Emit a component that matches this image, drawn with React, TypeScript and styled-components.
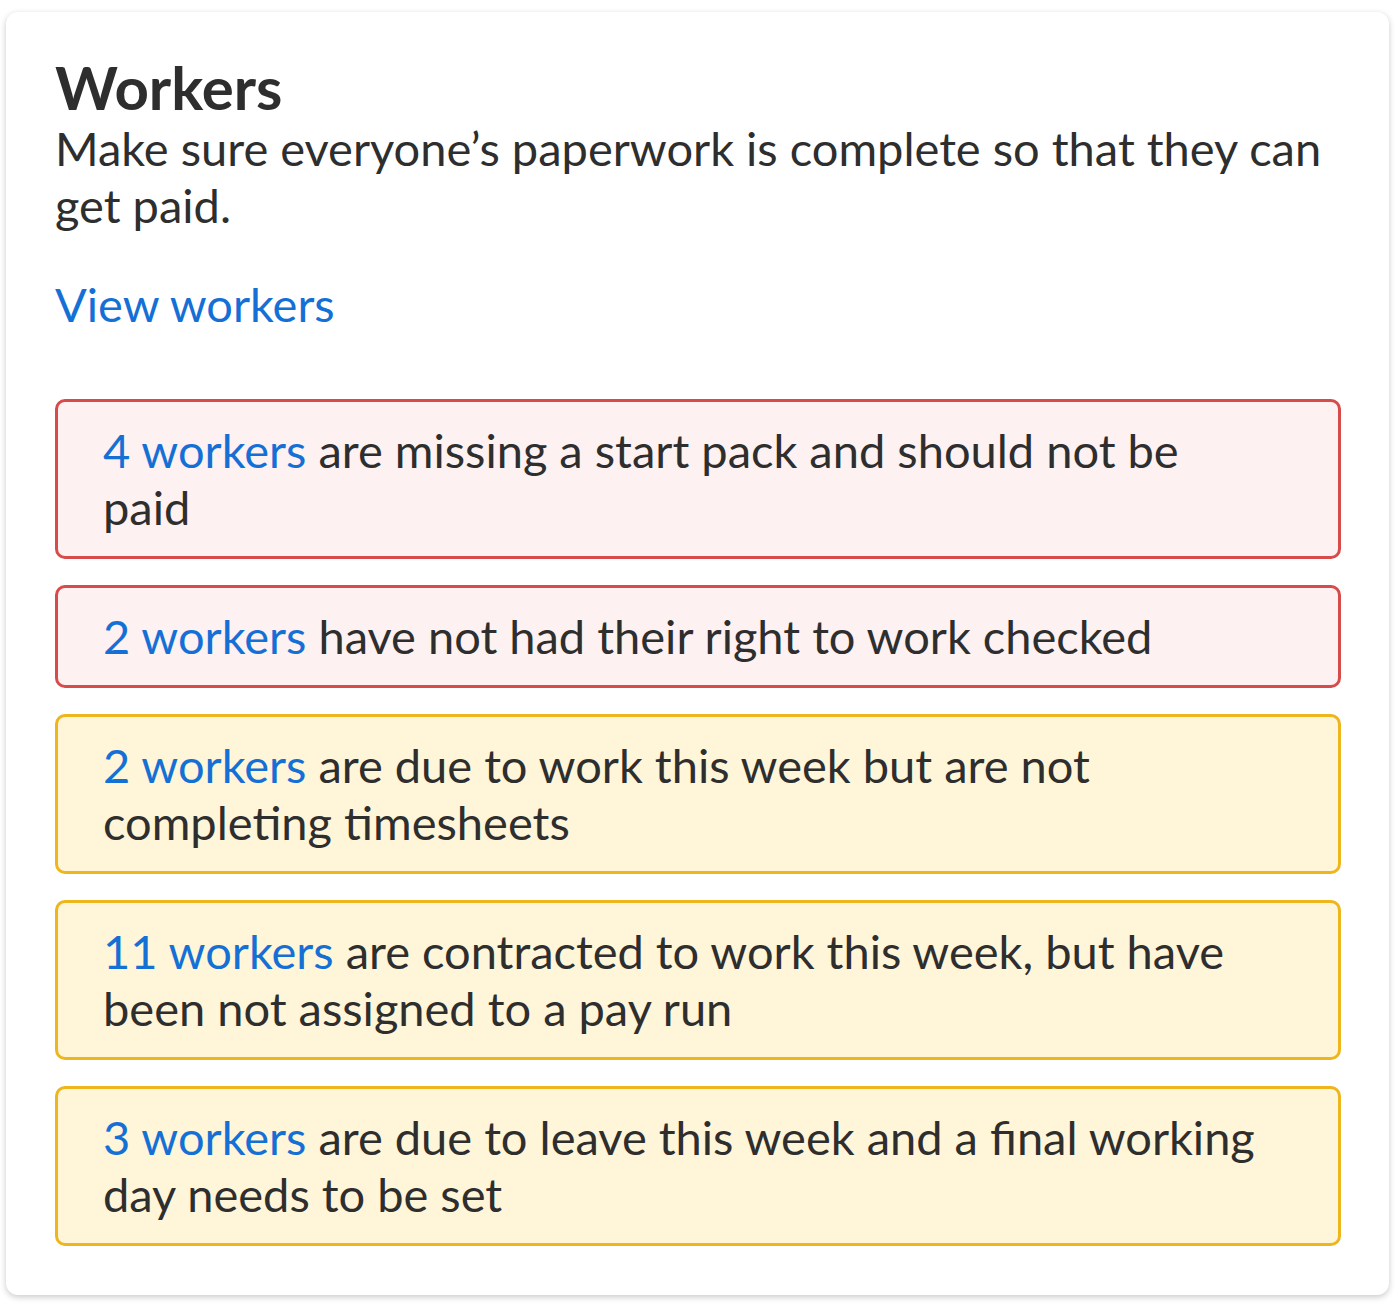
import styled, { createGlobalStyle } from 'styled-components';

const GlobalStyle = createGlobalStyle`
  html, body {
    margin: 0;
    padding: 0;
    background: #ffffff;
  }
  * {
    box-sizing: border-box;
  }
`;

const Page = styled.div`
  padding: 12px 6px;
  font-family: Lato, 'Noto Sans', sans-serif;
  color: #2e2e2e;
`;

const Card = styled.section`
  background: #ffffff;
  border-radius: 12px;
  box-shadow: 0 2px 6px rgba(0, 0, 0, 0.22);
  padding: 42px 48px 49px 49px;
`;

const Title = styled.h1`
  margin: 0;
  font-size: 60px;
  line-height: 66px;
  font-weight: 700;
`;

const Description = styled.p`
  margin: 0;
  font-size: 47px;
  line-height: 57px;
`;

const ViewLink = styled.a`
  display: inline-block;
  margin-top: 42px;
  font-size: 47px;
  line-height: 57px;
  color: #1570d6;
  text-decoration: none;
`;

const AlertList = styled.div`
  margin-top: 66px;
  display: flex;
  flex-direction: column;
  gap: 26px;
`;

type Tone = 'error' | 'warning';

const tones: Record<Tone, { border: string; bg: string }> = {
  error: { border: '#d84b4b', bg: '#fdf1f1' },
  warning: { border: '#eeb51c', bg: '#fff5d8' },
};

const Alert = styled.div<{ $tone: Tone }>`
  border: 3px solid ${({ $tone }) => tones[$tone].border};
  background: ${({ $tone }) => tones[$tone].bg};
  border-radius: 10px;
  padding: 20px 69px 20px 45px;
  font-size: 47px;
  line-height: 57px;
`;

const Count = styled.a`
  color: #1570d6;
  text-decoration: none;
`;

const alerts: { tone: Tone; count: string; text: string }[] = [
  { tone: 'error', count: '4 workers', text: 'are missing a start pack and should not be paid' },
  { tone: 'error', count: '2 workers', text: 'have not had their right to work checked' },
  { tone: 'warning', count: '2 workers', text: 'are due to work this week but are not completing timesheets' },
  { tone: 'warning', count: '11 workers', text: 'are contracted to work this week, but have been not assigned to a pay run' },
  { tone: 'warning', count: '3 workers', text: 'are due to leave this week and a final working day needs to be set' },
];

export default function App() {
  return (
    <>
      <GlobalStyle />
      <Page>
        <Card>
          <Title>Workers</Title>
          <Description>Make sure everyone’s paperwork is complete so that they can get paid.</Description>
          <ViewLink href="#">View workers</ViewLink>
          <AlertList>
            {alerts.map((a, i) => (
              <Alert key={i} $tone={a.tone}>
                <Count href="#">{a.count}</Count> {a.text}
              </Alert>
            ))}
          </AlertList>
        </Card>
      </Page>
    </>
  );
}
